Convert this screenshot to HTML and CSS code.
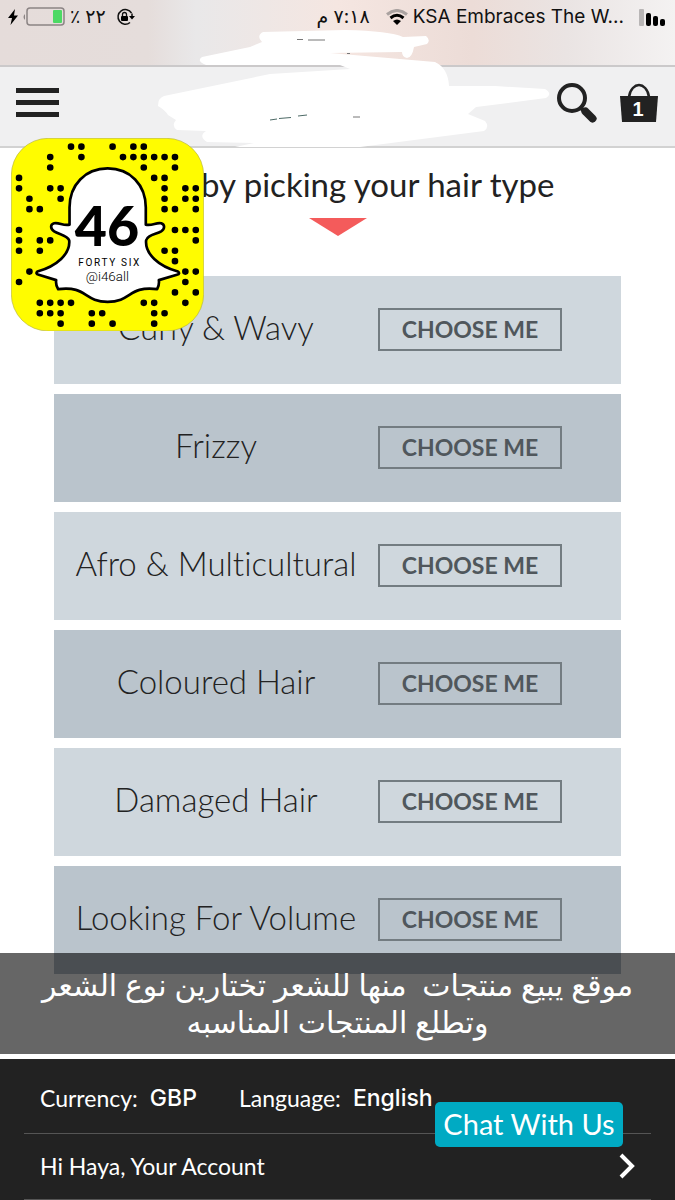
FILE: index.html
```html
<!DOCTYPE html>
<html lang="en">
<head>
    <meta charset="UTF-8">
    <meta name="viewport" content="width=device-width, initial-scale=1.0">
    <title>Pick your hair type</title>
    <link rel="stylesheet" href="styles.css">
</head>
<body>
    <div class="top">
        <div class="status-bar">
            <div class="status-group status-left">
                <svg width="10" height="16" viewBox="0 0 10 16"><path d="M7 0L0 9h4L2.500 16 10 6.500H6z"/></svg>
                <svg class="battery" width="42" height="20" viewBox="0 0 42 20">
                    <path d="M2 7q-3 3 0 6z" fill="#8b8484"/>
                    <rect x="4" y="1" width="37" height="17" rx="3" fill="none" stroke="#8b8484" stroke-width="1.500"/>
                    <rect x="30" y="3" width="9" height="13" rx="1" fill="#4cd964"/>
                </svg>
                <span>٪</span>
                <span>٢٢</span>
                <svg class="lock" width="19" height="18" viewBox="0 0 19 18">
                    <path d="M15.500 5A7.300 7.300 0 1 0 14 14.500M16 5.500V9" fill="none" stroke="#111" stroke-width="1.500"/>
                    <path d="M13 8h6l-3 3.500z"/>
                    <rect x="5" y="8" width="7" height="5" rx="1"/>
                    <path d="M6.500 8V6.500a2 2 0 0 1 4 0V8" fill="none" stroke="#111" stroke-width="1.300"/>
                </svg>
            </div>
            <span class="time" dir="rtl" lang="ar">٧:١٨ م</span>
            <div class="status-group">
                <svg width="22" height="17" viewBox="0 0 22 17">
                    <path d="M1 5.500Q11-2.500 21 5.500" fill="none" stroke="#aaa2a0" stroke-width="3"/>
                    <path d="M4.500 9Q11 3.500 17.500 9" fill="none" stroke="#000" stroke-width="3"/>
                    <path d="M11 16l-4-4q4-3 8 0z"/>
                </svg>
                <span class="carrier">KSA Embraces The W...</span>
                <svg class="signal" width="27" height="17" viewBox="0 0 27 17">
                    <rect width="5" height="17" rx="1" fill="#b9b6b6"/>
                    <rect x="7" y="4" width="5" height="13" rx="2"/>
                    <rect x="14" y="7" width="5" height="10" rx="2"/>
                    <rect x="21" y="10" width="5" height="7" rx="2"/>
                </svg>
            </div>
        </div>

        <header class="header">
            <button class="icon-button" aria-label="Menu">
                <svg width="43" height="29" viewBox="0 0 43 29"><path d="M0 0h43v5H0zM0 12h43v5H0zM0 24h43v5H0z"/></svg>
            </button>
            <div class="header-actions">
                <button class="icon-button" aria-label="Search">
                    <svg width="40" height="40" viewBox="0 0 40 40">
                        <circle cx="15" cy="15" r="13" fill="none" stroke="#222" stroke-width="4"/>
                        <path d="M24 25L35 35.500" fill="none" stroke="#222" stroke-width="4"/>
                        <path d="M28.500 28.500L35.500 35.500" fill="none" stroke="#222" stroke-width="8" stroke-linecap="round"/>
                    </svg>
                </button>
                <button class="icon-button" aria-label="Bag">
                    <svg width="38" height="40" viewBox="0 0 38 40">
                        <path d="M0 13h38l-2 26H2z"/>
                        <path d="M9 14C10 6 15 2 19 2s9 4 10 12" fill="none" stroke="#222" stroke-width="2.500"/>
                        <text class="bag-count" x="18" y="33" text-anchor="middle">1</text>
                    </svg>
                </button>
            </div>
        </header>

        <svg class="scribble" viewBox="0 0 675 150">
            <path d="M263 32L345 30Q390 31 403 37L426 36Q431 40 427 44L414 47Q412 58 407 58Q402 57 402 52L330 53 435 62Q448 68 449 86L495 86 545 89Q553 94 546 98L476 107 468 114 485 121Q490 127 484 131L360 147H235L254 143 207 142Q198 136 206 131L177 130Q171 126 176 120L168 115Q165 110 158 106 158 98 164 96L270 74 350 69 340 65H206Q196 61 202 57L250 47 262 42Q256 36 263 32z"/>
            <path class="ink" d="M297 39.500h6M308 40h17M347 53.500h3M353 117h7" stroke="#777"/>
            <path class="ink" d="M270 120l7-1M279 118.500l12-1M298 116l9-1" stroke="#4d6a66"/>
        </svg>
    </div>

    <svg class="snapcode" viewBox="33 22 577 578" role="img" aria-label="Snapcode @i46all">
        <rect x="34" y="23" width="575" height="576" rx="110" fill="#fffc00" stroke="#b8b63c" stroke-width="2"/>
        <g transform="translate(57 48) scale(31.080 31.120)">
            <path class="dots" d="M5 0h0M6 0h0M9 0h0M11 0h0M12 0h0
                M3 1h0M6 1h0M10 1h0M11 1h0M12 1h0M13 1h0M14 1h0M15 1h0
                M3 2h0M12 2h0M15 2h0
                M0 3h0M13 3h0M14 3h0
                M0 4h0M3 4h0M4 4h0M14 4h0M16 4h0M17 4h0
                M1 5h0M4 5h0M14 5h0M16 5h0M17 5h0
                M1 6h0M2 6h0M14 6h0M15 6h0M17 6h0
                M0 8h0M15 8h0M16 8h0M17 8h0
                M0 9h0M2 9h0M3 9h0M17 9h0
                M0 10h0M2 10h0M14 10h0M15 10h0
                M15 11h0
                M1 12h0M16 12h0M17 12h0
                M0 13h0M16 13h0
                M15 14h0M17 14h0
                M2 15h0M3 15h0M4 15h0M5 15h0M12 15h0M13 15h0M16 15h0
                M2 16h0M3 16h0M4 16h0M7 16h0M8 16h0M13 16h0M14 16h0
                M4 17h0M7 17h0M9 17h0M13 17h0"/>
        </g>
        <path class="ghost" d="M322 113C255 113 208 162 208 230V281C190 286 176 273 162 277C149 281 151 294 162 301C176 310 202 312 207 328C211 368 170 405 112 421C107 426 109 429 116 431L168 447Q166 462 174 474Q205 470 227 476C258 484 270 512 322 512C374 512 386 484 417 476Q440 470 470 474Q477 462 475 447L529 431C537 429 537 425 532 421C474 405 433 368 437 328C440 312 467 310 482 301C493 294 494 281 482 277C468 273 454 286 436 281V230C436 162 389 113 322 113z"/>
        <text class="snap-number" x="320" y="346" text-anchor="middle">46</text>
        <text class="snap-name" x="328" y="406" text-anchor="middle">FORTY SIX</text>
        <text class="snap-handle" x="321" y="450" text-anchor="middle">@i46all</text>
    </svg>

    <main class="content">
        <h1 class="title">by picking your hair type</h1>
        <svg class="pointer" width="58" height="18" viewBox="0 0 58 18"><path d="M0 0h58L29 18z" fill="#f45b5b"/></svg>

        <ul class="hair-list">
            <li class="hair-type"><span>Curly &amp; Wavy</span><button>CHOOSE ME</button></li>
            <li class="hair-type"><span>Frizzy</span><button>CHOOSE ME</button></li>
            <li class="hair-type"><span>Afro &amp; Multicultural</span><button>CHOOSE ME</button></li>
            <li class="hair-type"><span>Coloured Hair</span><button>CHOOSE ME</button></li>
            <li class="hair-type"><span>Damaged Hair</span><button>CHOOSE ME</button></li>
            <li class="hair-type"><span>Looking For Volume</span><button>CHOOSE ME</button></li>
        </ul>

        <p class="caption" dir="rtl" lang="ar">موقع يبيع منتجات &nbsp;منها للشعر تختارين نوع الشعر<br>وتطلع المنتجات المناسبه</p>
    </main>

    <footer class="footer">
        <div class="footer-row">
            <span>Currency:</span>
            <a class="setting" href="#currency">GBP</a>
            <span>Language:</span>
            <a class="setting" href="#language">English</a>
        </div>
        <a class="footer-row account" href="#account">
            <span>Hi Haya, Your Account</span>
            <svg width="16" height="26" viewBox="0 0 16 26"><path d="M2 2l11 11L2 24" fill="none" stroke="#fff" stroke-width="4"/></svg>
        </a>
        <button class="chat">Chat With Us</button>
    </footer>
</body>
</html>
```
FILE: styles.css
```css
* {
    box-sizing: border-box;
}

body {
    margin: 0;
    position: relative;
    min-height: 100vh;
    display: flex;
    flex-direction: column;
    background-color: #fff;
    color: #222;
    font-family: Lato, "DejaVu Sans", sans-serif;
}

button {
    font-family: inherit;
    cursor: pointer;
}

svg {
    display: block;
    flex-shrink: 0;
}

.top {
    position: relative;
}

/* phone status bar */
.status-bar {
    display: flex;
    align-items: flex-start;
    height: 65px;
    padding: 5px 9px 0 8px;
    background: linear-gradient(90deg, #e5dcda 0%, #e5dddb 22%, #e9e8e9 29%, #f5e6e1 50%, #ecdcd7 70%, #eae4e3 84%, #f4f2f2 100%);
    color: #111;
    font-family: Inter, "DejaVu Sans", sans-serif;
    font-size: 19px;
    line-height: 24px;
    white-space: nowrap;
}

.status-group {
    display: flex;
    align-items: center;
    gap: 5px;
}

.status-left {
    margin-right: auto;
}

.lock {
    margin-left: 5px;
}

.time {
    margin-right: 16px;
}

.signal {
    margin-left: 10px;
}

.header {
    display: flex;
    align-items: center;
    justify-content: space-between;
    height: 83px;
    padding: 0 17px 8px 16px;
    background-color: #f0f0f1;
    border-top: 2px solid #cbc9ca;
    border-bottom: 2px solid #d2d2d2;
}

.header-actions {
    display: flex;
    gap: 23px;
}

.icon-button {
    padding: 0;
    border: none;
    background: none;
}

.icon-button path {
    fill: #222;
}

.icon-button path[fill="none"] {
    fill: none;
}

.bag-count {
    fill: #fff;
    font-family: "Liberation Sans", sans-serif;
    font-size: 20px;
    font-weight: bold;
}

.scribble {
    position: absolute;
    top: 0;
    left: 0;
    width: 100%;
    fill: #fff;
    pointer-events: none;
}

.ink {
    fill: none;
    stroke-width: 1;
}

/* snapcode sticker */
.snapcode {
    position: absolute;
    top: 138px;
    left: 11px;
    width: 193px;
    z-index: 2;
}

.dots {
    fill: none;
    stroke: #000;
    stroke-width: 0.640;
    stroke-linecap: round;
}

.ghost {
    fill: #fff;
    stroke: #000;
    stroke-width: 8;
    stroke-linejoin: round;
}

.snap-number {
    font-size: 166px;
    font-weight: 900;
}

.snap-name {
    font-family: Roboto, sans-serif;
    font-size: 30px;
    letter-spacing: 5px;
}

.snap-handle {
    font-family: Roboto, sans-serif;
    font-size: 40px;
    font-weight: 300;
}

.content {
    position: relative;
    padding: 16px 54px 85px;
}

.title {
    margin: 0;
    padding-left: 147px;
    font-size: 33px;
    font-weight: 400;
    line-height: 40px;
    white-space: nowrap;
}

.pointer {
    margin: 14px auto 40px;
}

.hair-list {
    display: grid;
    gap: 10px;
    margin: 0;
    padding: 0;
    list-style: none;
}

.hair-type {
    display: flex;
    align-items: center;
    height: 108px;
    padding: 0 59px 2px 0;
    background-color: #cfd7dd;
}

.hair-type:nth-child(even) {
    background-color: #bac4cc;
}

.hair-type span {
    flex: 1;
    padding-bottom: 4px;
    font-size: 33px;
    font-weight: 300;
    font-variant-ligatures: none;
    text-align: center;
    white-space: nowrap;
}

.hair-type button {
    width: 184px;
    height: 43px;
    padding: 0;
    border: 2px solid #737c81;
    background: none;
    color: #50575c;
    font-size: 23px;
    font-weight: 700;
}

.caption {
    position: absolute;
    left: 0;
    right: 0;
    bottom: 5px;
    margin: 0;
    padding: 13px 20px 14px;
    background-color: rgba(0, 0, 0, 0.6);
    color: #fff;
    font-family: "Noto Sans", "DejaVu Sans", sans-serif;
    font-size: 30px;
    line-height: 37px;
    text-align: center;
}

.footer {
    position: relative;
    flex: 1;
    padding: 0 24px;
    background-color: #222;
    color: #fff;
    font-size: 23px;
}

.footer-row {
    display: flex;
    align-items: center;
    height: 66px;
    padding: 0 16px 2px;
    border-bottom: 1px solid #555;
}

.footer-row:first-child {
    height: 75px;
    padding-top: 6px;
}

.footer a {
    color: #fff;
    text-decoration: none;
}

.setting {
    margin: 0 42px 0 12px;
    font-family: Inter, sans-serif;
    font-weight: 500;
}

.account {
    justify-content: space-between;
}

.chat {
    position: absolute;
    top: 43px;
    right: 52px;
    width: 188px;
    height: 45px;
    padding: 0 0 2px;
    border: none;
    border-radius: 5px;
    background-color: #00aac3;
    color: #fff;
    font-size: 29px;
}
```
